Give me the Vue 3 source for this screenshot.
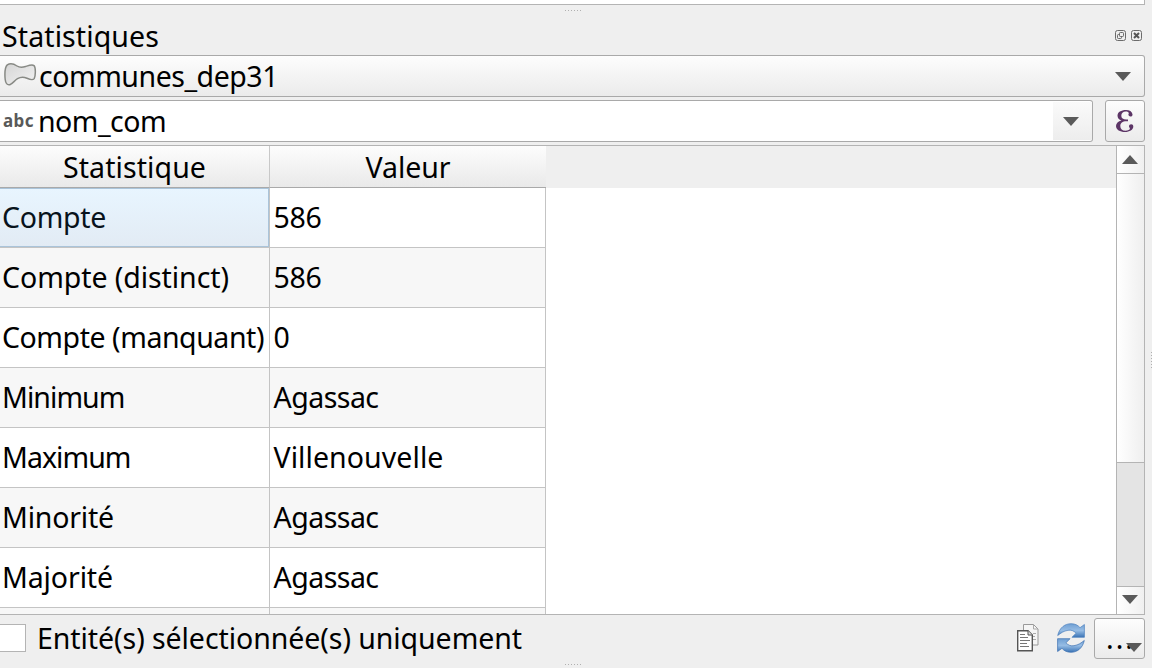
<script setup>
const rows = [
  ['Compte', 104, '586', 48],
  ['Compte (distinct)', 227, '586', 48],
  ['Compte (manquant)', 262, '0', 16],
  ['Minimum', 122.5, 'Agassac', 105],
  ['Maximum', 128.5, 'Villenouvelle', 170],
  ['Minorité', 112, 'Agassac', 105],
  ['Majorité', 111, 'Agassac', 105],
  ['', 0, '', 0],
]
// Adjusts tracking so that a label fills the given width in pixels.
const vFit = {
  mounted(el, { value }) {
    if (!value) return
    const n = el.textContent.length
    const w = el.getBoundingClientRect().width
    el.style.letterSpacing = `${(value - w) / n}px`
  },
}
</script>

<template>
  <div class="panel">
    <div class="upper"></div>
    <div class="grip"><i v-for="n in 6" :key="n"></i></div>
    <header class="title">
      <span v-fit="157" class="t">Statistiques</span>
      <svg class="wbtns" width="28" height="12" viewBox="0 0 28 12" fill="none" stroke="#6b6b6b">
        <rect x=".5" y=".5" width="10" height="10" rx="2" />
        <rect x="4.5" y="2.5" width="4" height="4" rx=".8" />
        <path d="M4.5 4.5H3.3a.8.8 0 0 0-.8.8v2.4a.8.8 0 0 0 .8.8h2.4a.8.8 0 0 0 .8-.8V6.5" />
        <rect x="16.500" y=".5" width="10" height="10" rx="2" />
        <path d="M19 3l5 5M24 3l-5 5" stroke="#555" stroke-width="2" />
      </svg>
    </header>

    <div class="combo layer">
      <svg class="poly" width="33" height="24" viewBox="0 0 33 24">
        <defs><linearGradient id="pg" x1="0" y1="0" x2="1" y2="1"><stop offset="0" stop-color="#d5d5d5" /><stop offset="1" stop-color="#f3f3f3" /></linearGradient></defs>
        <path d="M3.300 1.900C6 .2 10 1 13 3c2.500 1.600 5.600 1.400 8.500.5C24.500 2.600 28 1.200 30 2.600c2 2.200 1.500 10.400.2 13-1.500 2-4.300 1-7.200-.3-3.300-1.500-6.400-1.500-9.500.4-3 1.900-5 5-7.700 6C3 22.300 1.600 20 1.200 16.500.7 11.500.7 4.500 3.300 1.900z" fill="url(#pg)" stroke="#888a85" stroke-width="1.500" />
      </svg>
      <span v-fit="239" class="t">communes_dep31</span>
      <svg class="arrow" width="16" height="9"><path d="M0 0h16L8 9z" fill="#5a5a5a" /></svg>
    </div>

    <div class="fieldrow">
      <div class="combo field">
        <span v-fit="31" class="abc">abc</span>
        <span v-fit="128" class="t">nom_com</span>
        <span class="drop"><svg width="16" height="9"><path d="M0 0h16L8 9z" fill="#5a5a5a" /></svg></span>
      </div>
      <div class="eps">
        <svg width="20" height="24" viewBox="0 0 20 24" fill="#5c3566">
          <path d="M17.500 5.200C17 2.500 14.500 1 11 1 6 1 2.500 3.200 2.500 6.700c0 2.300 1.500 3.900 4 4.700C3.200 12.200 1 14.200 1 17c0 3.800 4 6 9 6 4.500 0 8.300-2.300 8.300-5.500 0-1.500-.9-2.300-2.100-2.300-1.300 0-2.200.8-2.200 2 0 1.300.9 1.400.9 2.300 0 1.300-1.900 2.200-4.400 2.200-3.300 0-5.200-1.900-5.200-4.800 0-3 2.200-4.700 6-4.700h1.700v-1.700h-1.800C8.200 10.500 6.300 9.200 6.300 6.700c0-2.600 1.700-4.300 4.500-4.300 1.700 0 2.900.6 3 1.500.1.600-.4.800-.4 1.700 0 1.100.8 1.900 2 1.900 1.300 0 2.300-.9 2.100-2.300z" />
        </svg>
      </div>
    </div>

    <div class="view">
      <div class="content">
        <div class="head">
          <div class="h1"><span v-fit="143" class="t">Statistique</span></div>
          <div class="h2"><span v-fit="85" class="t">Valeur</span></div>
        </div>
        <div class="rows">
          <div v-for="(r, i) in rows" :key="i" class="row" :class="{ alt: i % 2, sel: i === 0 }">
            <div class="c1"><span v-fit="r[1]" class="t">{{ r[0] }}</span></div>
            <div class="c2"><span v-fit="r[3]" class="t">{{ r[2] }}</span></div>
          </div>
        </div>
      </div>
      <div class="scroll">
        <div class="sbtn"><svg width="16" height="9"><path d="M0 9h16L8 0z" fill="#5a5a5a" /></svg></div>
        <div class="thumb"></div>
        <div class="track"></div>
        <div class="sbtn down"><svg width="16" height="9"><path d="M0 0h16L8 9z" fill="#5a5a5a" /></svg></div>
      </div>
    </div>

    <footer class="foot">
      <div class="check"></div>
      <span v-fit="485" class="t">Entité(s) sélectionnée(s) uniquement</span>
      <svg class="copy" width="22" height="28" viewBox="0 0 22 28">
        <path d="M6.500.5h10l4.500 4.500v16H6.500z" fill="#f5f5f5" stroke="#999" />
        <path d="M16.500.5V5H21M16 9.500h3M16 12.500h2M16 15.500h3" fill="none" stroke="#aaa" />
        <path d="M.7 6.700h10.300l4.300 4.300v15.800H.7z" fill="#fff" stroke="#555" stroke-width="1.400" />
        <path d="M11 6.700V11h4.300" fill="#ddd" stroke="#555" />
        <path d="M3 10.500h5M3 13.500h8M3 16.500h10M3 19.500h7M3 22.500h9" stroke="#777" />
      </svg>
      <svg class="sync" width="28" height="30" viewBox="0 0 28 30">
        <defs><linearGradient id="bg" x1="0" y1="0" x2="0" y2="1"><stop offset="0" stop-color="#6f9fd3" /><stop offset=".5" stop-color="#96bce4" /><stop offset="1" stop-color="#3a73b5" /></linearGradient></defs>
        <path d="M.7 12.500C2.500 4.500 8 .7 14 .7c4 0 7 1.500 9 4l4.400-3.200v12.800H15l4-4c-2-2.600-5-3.600-8-3-4.500.7-7 2.700-10.300 5.200z" fill="url(#bg)" stroke="#4a7fbe" stroke-width=".7" />
        <path d="M27.300 17.500C25.500 25.500 20 29.300 14 29.300c-4 0-7-1.500-9-4L.6 28.500V15.700H13l-4 4c2 2.600 5 3.600 8 3 4.500-.7 7-2.700 10.300-5.200z" fill="url(#bg)" stroke="#3a6fb0" stroke-width=".7" />
      </svg>
      <div class="more">
        <span v-fit="29" class="t">...</span>
        <svg class="marr" width="16" height="9"><path d="M0 0h16L8 9z" fill="#5a5a5a" /></svg>
      </div>
    </footer>
    <div class="grip low"><i v-for="n in 6" :key="n"></i></div>
    <div class="grip side"><i v-for="n in 6" :key="n"></i></div>
  </div>
</template>

<style>
body { background: #efefef; }
</style>

<style scoped>
* { box-sizing: border-box; }
.panel { position: relative; width: 1152px; height: 668px; overflow: hidden; background: #efefef; color: #000; font-family: "Noto Sans", sans-serif; font-size: 28.5px; display: flex; flex-direction: column; }
.t { white-space: pre; line-height: 40px; }
svg { display: block; flex: none; }
.upper { height: 5px; width: 1145px; flex: none; background: #fff; border: solid #b4b4b4; border-width: 0 1px 1px 0; }
.grip { position: absolute; left: 565px; top: 10px; display: flex; gap: 2px; }
.grip i { width: 1px; height: 1px; background: #b0b0b0; }
.grip.low { top: 664px; }
.grip.side { left: 1151px; top: 352px; flex-direction: column; }
.title { height: 50px; flex: none; display: flex; align-items: flex-start; justify-content: space-between; padding: 11px 9px 0 2px; }
.wbtns { margin-top: 14px; }
.combo { display: flex; align-items: center; border: 1px solid #a9a9a9; border-left: 0; border-radius: 0 3px 3px 0; height: 42px; flex: none; }
.layer { width: 1145px; background: linear-gradient(#fdfdfd, #ebebeb); padding: 0 13px 0 4px; }
.poly { margin: 0 2px 3px 0; }
.arrow { margin-left: auto; }
.fieldrow { display: flex; gap: 12px; margin-top: 3px; height: 42px; flex: none; }
.field { width: 1093px; background: #fff; padding-left: 3px; }
.abc { font: bold 17px/22px "Noto Sans", sans-serif; color: #595959; margin-right: 4px; margin-top: -1px; }
.drop { margin-left: auto; width: 39px; height: 38px; background: linear-gradient(#fafafa, #ededed); display: flex; align-items: center; padding-left: 10px; }
.eps { width: 40px; height: 42px; border: 1px solid #a9a9a9; border-radius: 3px; background: linear-gradient(#fdfdfd, #ebebeb); display: flex; align-items: center; justify-content: center; }
.view { margin-top: 3px; height: 470px; width: 1145px; flex: none; display: flex; background: #fff; border: solid #b4b4b4; border-width: 1px 1px 1px 0; }
.content { width: 1116px; overflow: hidden; }
.head { height: 42px; display: flex; background: #efefef; }
.h1, .h2 { display: flex; justify-content: center; background: linear-gradient(#fdfdfd, #e9e9e9); border-bottom: 1px solid #a9a9a9; }
.h1 { width: 270px; border-right: 1px solid #c8c8c8; }
.h2 { width: 276px; }
.h1 .t, .h2 .t { margin-top: 1px; }
.row { width: 546px; height: 60px; display: flex; background: #fff; border-bottom: 1px solid #c4c4c4; }
.row.alt { background: #f7f7f7; }
.c1, .c2 { display: flex; align-items: center; border-right: 1px solid #c4c4c4; padding-bottom: 2px; }
.c1 { width: 270px; padding-left: 2px; }
.c2 { width: 276px; padding-left: 3.5px; }
.sel .c1 { background: linear-gradient(#e8f5ff, #e2ebf4); box-shadow: inset 0 1px #aac4da, inset -1px -1px #aac4da; color: #08131c; }
.scroll { width: 28px; border-left: 1px solid #b4b4b4; display: flex; flex-direction: column; }
.sbtn { height: 28px; border-bottom: 1px solid #b4b4b4; display: flex; align-items: center; padding-left: 5px; background: linear-gradient(90deg, #fff, #f0f0f0); }
.sbtn.down { border-bottom: 0; border-top: 1px solid #b4b4b4; padding-bottom: 2px; }
.thumb { height: 289px; background: linear-gradient(90deg, #fff, #efefef); border-bottom: 1px solid #b4b4b4; }
.track { flex: 1; background: #e4e4e4; }
.foot { display: flex; align-items: flex-start; width: 1145px; height: 53px; flex: none; }
.check { width: 26px; height: 28px; margin: 9px 11px 0 0; background: #fff; border: 1px solid #b4b4b4; border-left: 0; }
.foot > .t { margin-top: 3px; }
.copy { margin: 9px 18px 0 auto; }
.sync { margin: 8px 9px 0 0; }
.more { position: relative; display: flex; align-items: flex-start; width: 51px; height: 41px; margin-top: 3px; border: 1px solid #a9a9a9; border-radius: 3px; background: linear-gradient(#fdfdfd, #ebebeb); padding-left: 11px; }
.more .t { margin-top: -1px; }
.marr { position: absolute; left: 31px; top: 24px; }
</style>
